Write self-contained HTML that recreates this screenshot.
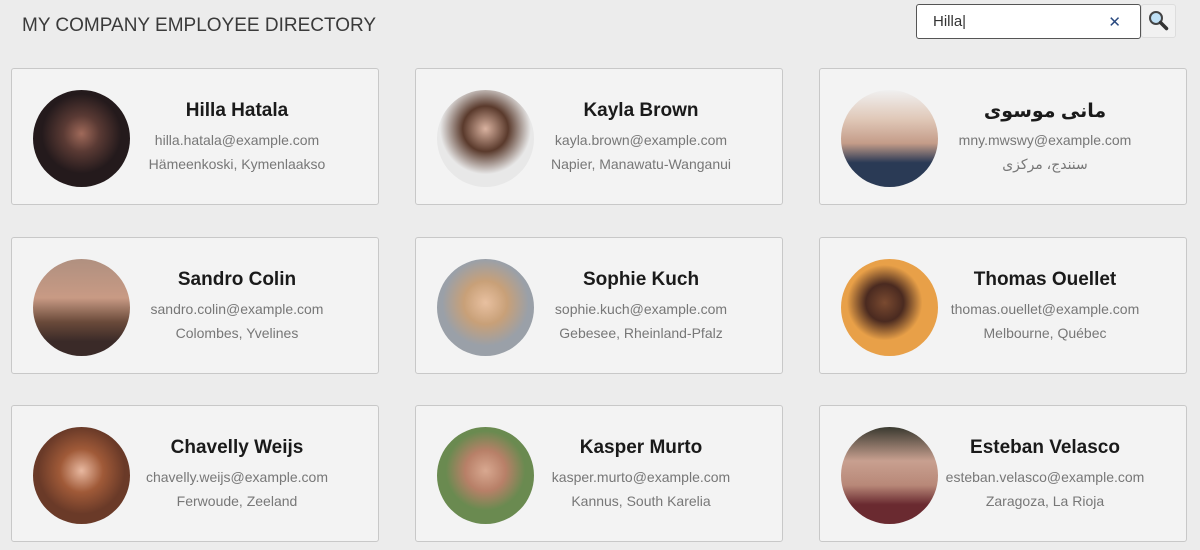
<!DOCTYPE html>
<html><head><meta charset="utf-8"><style>
body{margin:0;width:1200px;height:550px;background:#ececec;font-family:"Liberation Sans","DejaVu Sans",sans-serif;position:relative;overflow:hidden}
h1{position:absolute;left:22px;top:15px;margin:0;font-size:19px;font-weight:normal;color:#3a3a3a;letter-spacing:0}
.search{position:absolute;left:916px;top:4px;width:225px;height:35px;background:#fff;border:1px solid #555;border-radius:3px;box-sizing:border-box}
.search span{position:absolute;left:16px;top:8px;font-size:15px;color:#333}
.search b{position:absolute;right:19px;top:8px;font-size:15px;color:#2a4a80;font-weight:bold}
.btn{position:absolute;left:1141px;top:4px;width:35px;height:34px;background:#f1f1f1;border:1px solid #ddd;border-radius:3px;box-sizing:border-box}
.card{position:absolute;width:368px;height:137px;background:#f3f3f3;border:1px solid #c8c8c8;border-radius:3px;box-sizing:border-box}
.av{position:absolute;left:21px;top:21px;width:97px;height:97px;border-radius:50%}
.t{position:absolute;left:120px;width:210px;text-align:center}
.n{top:31px;font-size:19px;font-weight:bold;color:#1a1a1a}
.e{top:63px;font-size:14px;color:#777}
.l{top:87px;font-size:14px;color:#777}
</style></head><body>
<h1>MY COMPANY EMPLOYEE DIRECTORY</h1>
<div class="search"><span>Hilla|</span><b>✕</b></div>
<div class="btn"><svg width="33" height="32" viewBox="0 0 33 32"><circle cx="14" cy="13" r="6" fill="#bfe0f5" stroke="#444" stroke-width="2"/><path d="M18.5 17.5l6 6" stroke="#333" stroke-width="3.5" stroke-linecap="round"/></svg></div>

<div class="card" style="left:11px;top:68px"><div class="av" style="background:radial-gradient(circle at 50% 45%,#a06a5a 0,#5a3a34 25%,#241a1c 55%)"></div><div class="t n">Hilla Hatala</div><div class="t e">hilla.hatala@example.com</div><div class="t l">Hämeenkoski, Kymenlaakso</div></div>
<div class="card" style="left:415px;top:68px"><div class="av" style="background:radial-gradient(circle at 50% 40%,#d9b2a0 0,#5a3a2c 30%,#e8e8e8 60%)"></div><div class="t n">Kayla Brown</div><div class="t e">kayla.brown@example.com</div><div class="t l">Napier, Manawatu-Wanganui</div></div>
<div class="card" style="left:819px;top:68px"><div class="av" style="background:linear-gradient(#f0f0f0 0,#e0c8b8 30%,#c49c88 55%,#2a3a55 75%)"></div><div class="t n">مانی موسوی</div><div class="t e">mny.mwswy@example.com</div><div class="t l">سنندج، مرکزی</div></div>

<div class="card" style="left:11px;top:237px"><div class="av" style="background:linear-gradient(#b09080 0,#c89a84 40%,#6a4a3a 65%,#3a2a28 85%)"></div><div class="t n">Sandro Colin</div><div class="t e">sandro.colin@example.com</div><div class="t l">Colombes, Yvelines</div></div>
<div class="card" style="left:415px;top:237px"><div class="av" style="background:radial-gradient(circle at 50% 45%,#e8c0a0 0,#c8a078 30%,#9aa0a8 60%)"></div><div class="t n">Sophie Kuch</div><div class="t e">sophie.kuch@example.com</div><div class="t l">Gebesee, Rheinland-Pfalz</div></div>
<div class="card" style="left:819px;top:237px"><div class="av" style="background:radial-gradient(circle at 45% 45%,#7a4a30 0,#4a2a20 25%,#e8a048 50%)"></div><div class="t n">Thomas Ouellet</div><div class="t e">thomas.ouellet@example.com</div><div class="t l">Melbourne, Québec</div></div>

<div class="card" style="left:11px;top:405px"><div class="av" style="background:radial-gradient(circle at 50% 45%,#e8b8a0 0,#a05a38 30%,#6a3a28 60%)"></div><div class="t n">Chavelly Weijs</div><div class="t e">chavelly.weijs@example.com</div><div class="t l">Ferwoude, Zeeland</div></div>
<div class="card" style="left:415px;top:405px"><div class="av" style="background:radial-gradient(circle at 50% 45%,#d8a890 0,#b88068 28%,#6a8a50 55%)"></div><div class="t n">Kasper Murto</div><div class="t e">kasper.murto@example.com</div><div class="t l">Kannus, South Karelia</div></div>
<div class="card" style="left:819px;top:405px"><div class="av" style="background:linear-gradient(#3a3a30 0,#c8a090 35%,#b88878 60%,#6a2a30 80%)"></div><div class="t n">Esteban Velasco</div><div class="t e">esteban.velasco@example.com</div><div class="t l">Zaragoza, La Rioja</div></div>
</body></html>
